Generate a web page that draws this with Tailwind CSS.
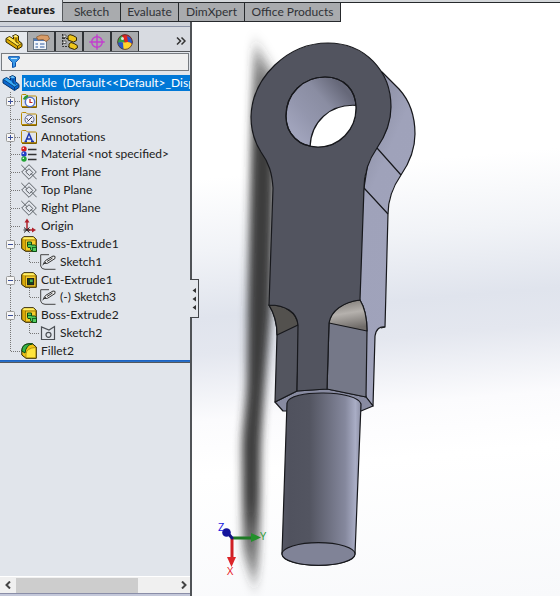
<!DOCTYPE html>
<html lang="en">
  <head>
    <meta charset="UTF-8" />
    <meta name="viewport" content="width=device-width, initial-scale=1.0" />
    <script src="https://cdn.jsdelivr.net/npm/@tailwindcss/browser@4"></script>
    <title>kuckle</title>
  </head>
  <body class="font-['Lato','Open_Sans',sans-serif] text-xs text-[#202020]">
    <!-- icon sprites -->
    <svg class="hidden">
      <defs>
        <linearGradient id="gold" x1="0" y1="0" x2="1" y2="1">
          <stop offset="0" stop-color="#fff27a" />
          <stop offset="1" stop-color="#f0bd0a" />
        </linearGradient>
      </defs>
      <symbol id="line" viewBox="0 0 20 18"><path d="M10.5 0V18M11 9.5H20" fill="none" stroke="#777" stroke-dasharray="1 1" /></symbol>
      <symbol id="pass" viewBox="0 0 20 18"><path d="M10.5 0V18" fill="none" stroke="#777" stroke-dasharray="1 1" /></symbol>
      <symbol id="end" viewBox="0 0 20 18"><path d="M10.5 0V10M11 9.5H20" fill="none" stroke="#777" stroke-dasharray="1 1" /></symbol>
      <symbol id="child" viewBox="0 0 20 18"><path d="M9.5 0V10M10 9.5H20" fill="none" stroke="#777" stroke-dasharray="1 1" /></symbol>
      <symbol id="minus" viewBox="0 0 20 18">
        <path d="M10.5 0V18M11 9.5H20" fill="none" stroke="#777" stroke-dasharray="1 1" />
        <rect x="6.5" y="5.5" width="8" height="8" rx="1" fill="#f6f6f6" stroke="#999" />
        <path d="M8 9.5H13" stroke="#3a4f9a" />
      </symbol>
      <symbol id="plus" viewBox="0 0 20 18">
        <use href="#minus" width="20" height="18" />
        <path d="M10.5 7V12" stroke="#3a4f9a" />
      </symbol>
      <symbol id="part" viewBox="0 0 18 16">
        <path d="M1 4.500L4.500 2.500 8.500 5V2.500L7.500 2 10.500.500 13.500 2V6.500L17 9.500V12.500L12.500 15.500 1 8Z" fill="#dca900" stroke="#332800" stroke-linejoin="round" />
        <path d="M1.500 4.500L4.500 3 9 6 11 8 16.500 9.800 12.500 12Z" fill="#ffe34d" />
        <path d="M8 2.300L10.500 1 13 2.300 11 3.500Z" fill="#fff08a" />
        <path d="M1.500 4.500L12.500 12V15M12.500 12L16.500 9.500M11 3.500V8L14 9.500" fill="none" stroke="#332800" stroke-width=".8" />
      </symbol>
      <symbol id="partblue" viewBox="0 0 18 16">
        <path d="M1 4.500L4.500 2.500 8.500 5V2.500L7.500 2 10.500.500 13.500 2V6.500L17 9.500V12.500L12.500 15.500 1 8Z" fill="#0866cf" stroke="#07366d" stroke-linejoin="round" />
        <path d="M1.500 4.500L4.500 3 9 6 11 8 16.500 9.800 12.500 12Z" fill="#36a9f5" />
        <path d="M8 2.300L10.500 1 13 2.300 11 3.500Z" fill="#6cc6ff" />
        <path d="M1.500 4.500L12.500 12V15M12.500 12L16.500 9.500M11 3.500V8L14 9.500" fill="none" stroke="#07366d" stroke-width=".8" />
      </symbol>
      <symbol id="folder" viewBox="0 0 16 16">
        <path d="M.5 2.500Q.5 1.500 1.500 1.500H5L6.500 3H14.500Q15.500 3 15.500 4V13.500H.5Z" fill="url(#gold)" stroke="#b88a08" />
        <path d="M1 14.500H15.500V4" fill="none" stroke="#7d6000" />
      </symbol>
      <symbol id="history" viewBox="0 0 16 16">
        <use href="#folder" width="16" height="16" />
        <circle cx="9" cy="9" r="4.700" fill="#fff" stroke="#5272cc" stroke-width="1.500" />
        <path d="M3 6.500A6 6 0 0 1 7 3" fill="none" stroke="#2b9a35" stroke-width="2.500" />
        <path d="M9 6V9.500H11.500" fill="none" stroke="#b22" stroke-width="1.200" />
      </symbol>
      <symbol id="sensors" viewBox="0 0 16 16">
        <use href="#folder" width="16" height="16" />
        <circle cx="8.500" cy="8.500" r="4.500" fill="#eef" stroke="#5b6690" />
        <path d="M6.500 10.500L11 6M5.500 7.500L7 8.500M10 10.500H11.500" stroke="#333" fill="none" />
      </symbol>
      <symbol id="note" viewBox="0 0 16 16">
        <use href="#folder" width="16" height="16" />
        <path d="M4.500 12.500L8 4.500 11.500 12.500M6 10H10.500M3.500 12.500H6M10 12.500H13" fill="none" stroke="#1c36b0" stroke-width="1.400" />
      </symbol>
      <symbol id="material" viewBox="0 0 16 16">
        <circle cx="3" cy="3" r="2.700" fill="#d81e1e" /><circle cx="3" cy="8" r="2.700" fill="#2340c8" /><circle cx="3" cy="13" r="2.700" fill="#22a535" />
        <circle cx="2.300" cy="2.200" r=".8" fill="#fff" /><circle cx="2.300" cy="7.200" r=".8" fill="#fff" /><circle cx="2.300" cy="12.200" r=".8" fill="#fff" />
        <path d="M7 3.500H15.500M7 8.500H15.500M7 13.500H15.500" stroke="#333" stroke-width="1.500" />
      </symbol>
      <symbol id="plane" viewBox="0 0 16 16">
        <path d="M8 .7L15.300 8 8 15.300.7 8ZM.3 1L6 6.700M10 9.500L15.700 15.300M8 4.700L11.800 8.500 8.500 11.500 4.700 8Z" fill="none" stroke="#5c6167" />
      </symbol>
      <symbol id="origin" viewBox="0 0 16 16">
        <path d="M6 12V3" stroke="#b0202a" stroke-width="1.500" /><path d="M3.500 4.500L6 .5 8.500 4.500Z" fill="#b0202a" />
        <path d="M6 12H12" stroke="#b0202a" stroke-width="1.500" /><path d="M11 9.500L15 12 11 14.500Z" fill="#b0202a" />
        <path d="M3 9.500L8.500 14.500M8.500 9.500L3 14.500M2.500 12H9" stroke="#222" />
      </symbol>
      <symbol id="box" viewBox="0 0 16 16">
        <path d="M.7 2.500L3 .7H12.500L15.300 3.500V15.300H4.500L.7 12.500Z" fill="#d9a908" stroke="#2d2400" />
        <path d="M1.500 2.500L3 1.200H12.300L14.500 3.500H4.500Z" fill="#fff06a" />
        <rect x="4.500" y="4" width="10.300" height="10.800" fill="#f5cd2a" stroke="#8a6900" stroke-width=".7" />
      </symbol>
      <symbol id="boss" viewBox="0 0 16 16">
        <use href="#box" width="16" height="16" />
        <path d="M6.500 6H10.500V9H13.500L15.500 10.500V15.500H11.500L9.500 13.500V11.500H7L6.500 10.500Z" fill="#52cc5c" stroke="#0c4a15" />
        <path d="M11 11.500H15.500M11.500 11.500V15.500M7 8.500H10.500" stroke="#0c4a15" stroke-width=".8" />
      </symbol>
      <symbol id="cut" viewBox="0 0 16 16">
        <use href="#box" width="16" height="16" />
        <rect x="6.700" y="6.700" width="5.800" height="5.800" fill="#49b956" stroke="#222" stroke-width="1.400" />
        <path d="M7 7H9V10H12V12H7Z" fill="#14451a" />
      </symbol>
      <symbol id="sketch" viewBox="0 0 16 16">
        <path d="M9 .7H.7V12Q1.500 15.300 5 15.300H15.500" fill="none" stroke="#444" />
        <path d="M3.500 9.500L5.500 6.500 13 2Q16 1.500 15 4.500L7.500 9.300Z" fill="#f2f2f2" stroke="#333" />
        <path d="M2.500 11L6 8M7 7.500L12.500 4" stroke="#333" />
      </symbol>
      <symbol id="sketch2" viewBox="0 0 16 16">
        <path d="M1.500 2V14.500H14.500V1.500L9 5Z" fill="none" stroke="#4b4f54" stroke-width="1.200" />
        <circle cx="8.500" cy="9.800" r="2.500" fill="none" stroke="#4b4f54" stroke-width="1.200" />
      </symbol>
      <symbol id="fillet" viewBox="0 0 16 16">
        <path d="M.8 8Q1 1 8 .8H11.500L15.300 4V15.300H5L.8 12Z" fill="#f0c414" stroke="#2d2400" />
        <path d="M.8 8Q1 1 8 .8H11.500Q5 2 4 10Z" fill="#36b548" stroke="#0c4a15" />
        <path d="M5 14.800V11Q5.500 5 14.800 4.500V14.800Z" fill="#ffe43c" stroke="#8a6d00" stroke-width=".6" />
      </symbol>
      <symbol id="props" viewBox="0 0 18 16">
        <rect x="1.500" y="4.500" width="13" height="11" fill="#f3f6fb" stroke="#678" />
        <rect x="2" y="5" width="12" height="2" fill="#4f79b8" />
        <path d="M3.500 10H6M8 10H12.500M3.500 13H6M8 13H12.500" stroke="#6f8fc0" stroke-width="1.500" />
        <path d="M4.500 3L9 1 16 1.500 17.500 5 14 7.500 11 5.500 6 6Z" fill="#d99c68" stroke="#8a5c34" stroke-width=".8" />
      </symbol>
      <symbol id="config" viewBox="0 0 18 16">
        <path d="M2.500 0V12.500H9M3 4.500H9" fill="none" stroke="#333" stroke-dasharray="2 1" />
        <path d="M3 1H6V3.500H3ZM3 7H6V9.500H3Z" fill="#eee" stroke="#444" stroke-width=".8" />
        <path d="M8 2L10 .7 13 1.500 16.500 3.500V6.500L13.500 8 8 6ZM9 10L11 8.500 14 9.500 17.300 11.500V14L14.500 15.500 9 13.500Z" fill="#edc51c" stroke="#332800" />
      </symbol>
      <symbol id="target" viewBox="0 0 16 16">
        <path d="M8 .3V15.700M.3 8H15.700" stroke="#c23fce" stroke-width="1.400" />
        <circle cx="8" cy="8" r="5.300" fill="none" stroke="#c23fce" stroke-width="1.400" />
      </symbol>
      <symbol id="ball" viewBox="0 0 16 16">
        <circle cx="8" cy="8" r="7.500" fill="#d81d1d" />
        <path d="M.7 9Q1 3 5 1.500L8 8.500Z" fill="#35a247" />
        <path d="M8 8.500L6.500.6A7.500 7.500 0 0 1 15 10Q12 7 8 8.500Z" fill="#e0251f" />
        <path d="M10 2A7.500 7.500 0 0 1 15.300 9.500Q13 8 11 8Z" fill="#2957c8" />
        <path d="M.8 9.500Q4 7.500 8 8.500 12 7 15 10A7.500 7.500 0 0 1 8 15.500 7.500 7.500 0 0 1 .8 9.500Z" fill="#ffd52b" />
        <path d="M.8 9Q3 7.500 6 8.500L6.500 15.300A7.500 7.500 0 0 1 .8 9Z" fill="#2957c8" />
        <circle cx="8" cy="8" r="7.400" fill="none" stroke="#333" stroke-width=".7" />
        <circle cx="5.500" cy="4.500" r="1.500" fill="#fff" fill-opacity=".8" />
      </symbol>
    </svg>

    <div class="flex h-screen flex-col overflow-hidden bg-white">
      <!-- command tabs -->
      <nav class="flex h-[22px] shrink-0 items-start bg-[linear-gradient(#d4d7da_0_2px,#26292c_2px_3px,#fff_3px)]">
        <button class="h-[22px] w-[63px] border-r border-b border-[#55585c] bg-[#dee1e6] font-['Open_Sans',sans-serif] text-[11px] font-bold">Features</button>
        <button class="mt-[2px] h-[20px] w-[58px] border border-l-0 border-[#26292c] bg-[#a9abae] text-[#303236]">Sketch</button>
        <button class="mt-[2px] h-[20px] w-[58px] border border-l-0 border-[#26292c] bg-[#a9abae] text-[#303236]">Evaluate</button>
        <button class="mt-[2px] h-[20px] w-[66px] border border-l-0 border-[#26292c] bg-[#a9abae] text-[#303236]">DimXpert</button>
        <button class="mt-[2px] h-[20px] w-[96px] border border-l-0 border-[#26292c] bg-[#a9abae] whitespace-nowrap text-[#303236]">Office Products</button>
      </nav>

      <div class="flex min-h-0 flex-1">
        <aside class="relative flex w-[192px] shrink-0 flex-col border-r-2 border-[#505357] bg-[#e1e5eb]">
          <div class="h-[9px] bg-[linear-gradient(#cfd3da_0_4px,#8991a5_4px_5px,#d8dbe1_5px)]"></div>
          <div class="flex h-[21px] items-stretch border-b border-[#55585c] bg-[#d8dbe1]">
            <button aria-label="Feature tree" class="-mb-px flex w-[28px] items-center justify-center border-t border-r border-[#55585c] bg-[#e6e9ee]"><svg class="h-4 w-[18px]"><use href="#part" /></svg></button>
            <button aria-label="Properties" class="flex w-[28px] items-center justify-center border-t border-r-2 border-[#303337] bg-[#a9abae]"><svg class="h-4 w-[18px]"><use href="#props" /></svg></button>
            <button aria-label="Configurations" class="flex w-[28px] items-center justify-center border-t border-r-2 border-[#303337] bg-[#a9abae]"><svg class="h-4 w-[18px]"><use href="#config" /></svg></button>
            <button aria-label="DimXpert manager" class="flex w-[28px] items-center justify-center border-t border-r-2 border-[#303337] bg-[#a9abae]"><svg class="size-4"><use href="#target" /></svg></button>
            <button aria-label="Display manager" class="flex w-[27px] items-center justify-center border-t border-r border-[#303337] bg-[#a9abae]"><svg class="size-4"><use href="#ball" /></svg></button>
            <button aria-label="More" class="mr-1 ml-auto flex items-center"><svg class="h-2 w-[10px]" viewBox="0 0 10 8" fill="none" stroke="#333" stroke-width="1.500"><path d="M1 .5L4.500 4 1 7.500M5.500 .5L9 4 5.500 7.500" /></svg></button>
          </div>
          <label class="mx-px mt-px flex h-[18px] items-center border border-[#777b80] bg-[#efefef] pl-[6px]">
            <svg class="h-3 w-3" viewBox="0 0 12 12"><path d="M.7.700H11.300V2.500L7.500 6.500V10.500L4.500 11.500V6.500L.7 2.500Z" fill="#3b9ae8" stroke="#0b4fa8" /><path d="M3 2.500H9" stroke="#c8e8ff" /></svg>
            <input aria-label="Filter" class="min-w-0 flex-1 bg-transparent outline-none" />
          </label>

          <!-- feature tree -->
          <ul class="mt-[3px] grid h-[286px] shrink-0 auto-rows-fr overflow-hidden whitespace-nowrap">
            <li class="flex items-center gap-[2px] pl-[2px]"><svg class="h-4 w-[18px] shrink-0"><use href="#partblue" /></svg><span class="flex-1 overflow-hidden bg-[#0078d7] pl-px leading-4 whitespace-pre text-white">kuckle  (Default&lt;&lt;Default&gt;_Disp</span></li>
            <li class="flex items-center"><button aria-label="Expand History"><svg class="block h-[18px] w-5"><use href="#plus" /></svg></button><svg class="mr-1 ml-px size-4"><use href="#history" /></svg>History</li>
            <li class="flex items-center"><svg class="h-[18px] w-5"><use href="#line" /></svg><svg class="mr-1 ml-px size-4"><use href="#sensors" /></svg>Sensors</li>
            <li class="flex items-center"><button aria-label="Expand Annotations"><svg class="block h-[18px] w-5"><use href="#plus" /></svg></button><svg class="mr-1 ml-px size-4"><use href="#note" /></svg>Annotations</li>
            <li class="flex items-center"><svg class="h-[18px] w-5"><use href="#line" /></svg><svg class="mr-1 ml-px size-4"><use href="#material" /></svg>Material &lt;not specified&gt;</li>
            <li class="flex items-center"><svg class="h-[18px] w-5"><use href="#line" /></svg><svg class="mr-1 ml-px size-4"><use href="#plane" /></svg>Front Plane</li>
            <li class="flex items-center"><svg class="h-[18px] w-5"><use href="#line" /></svg><svg class="mr-1 ml-px size-4"><use href="#plane" /></svg>Top Plane</li>
            <li class="flex items-center"><svg class="h-[18px] w-5"><use href="#line" /></svg><svg class="mr-1 ml-px size-4"><use href="#plane" /></svg>Right Plane</li>
            <li class="flex items-center"><svg class="h-[18px] w-5"><use href="#line" /></svg><svg class="mr-1 ml-px size-4"><use href="#origin" /></svg>Origin</li>
            <li class="flex items-center"><button aria-label="Collapse Boss-Extrude1"><svg class="block h-[18px] w-5"><use href="#minus" /></svg></button><svg class="mr-1 ml-px size-4"><use href="#boss" /></svg>Boss-Extrude1</li>
            <li class="flex items-center"><svg class="h-[18px] w-5"><use href="#pass" /></svg><svg class="h-[18px] w-5"><use href="#child" /></svg><svg class="mr-1 size-4"><use href="#sketch" /></svg>Sketch1</li>
            <li class="flex items-center"><button aria-label="Collapse Cut-Extrude1"><svg class="block h-[18px] w-5"><use href="#minus" /></svg></button><svg class="mr-1 ml-px size-4"><use href="#cut" /></svg>Cut-Extrude1</li>
            <li class="flex items-center"><svg class="h-[18px] w-5"><use href="#pass" /></svg><svg class="h-[18px] w-5"><use href="#child" /></svg><svg class="mr-1 size-4"><use href="#sketch" /></svg>(-) Sketch3</li>
            <li class="flex items-center"><button aria-label="Collapse Boss-Extrude2"><svg class="block h-[18px] w-5"><use href="#minus" /></svg></button><svg class="mr-1 ml-px size-4"><use href="#boss" /></svg>Boss-Extrude2</li>
            <li class="flex items-center"><svg class="h-[18px] w-5"><use href="#pass" /></svg><svg class="h-[18px] w-5"><use href="#child" /></svg><svg class="mr-1 size-4"><use href="#sketch2" /></svg>Sketch2</li>
            <li class="flex items-center"><svg class="h-[18px] w-5"><use href="#end" /></svg><svg class="mr-1 ml-px size-4"><use href="#fillet" /></svg>Fillet2</li>
          </ul>
          <div class="h-[3px] shrink-0 border-t border-b border-t-[#1c64c4] border-b-[#55585c] bg-[#2a6fc4]"></div>

          <div class="mt-auto flex h-[17px] shrink-0 items-center border-t border-white bg-[#f0f0f0]">
            <button aria-label="Scroll left" class="flex h-4 w-4 items-center justify-center"><svg class="h-2 w-[6px]" viewBox="0 0 6 8" fill="none" stroke="#444" stroke-width="2"><path d="M5 .5L1.500 4 5 7.500" /></svg></button>
            <div class="h-[15px] flex-1"><div class="h-full w-3/4 bg-[#cdcdcd]"></div></div>
            <button aria-label="Scroll right" class="flex h-4 w-3 items-center justify-center"><svg class="h-2 w-[6px]" viewBox="0 0 6 8" fill="none" stroke="#444" stroke-width="2"><path d="M1 .5L4.500 4 1 7.500" /></svg></button>
          </div>
          <div class="h-[3px] shrink-0 border-t border-[#8a8ea8] bg-[#c4c8da]"></div>

          <!-- splitter handle -->
          <button aria-label="Collapse panel" class="absolute top-[257px] left-[190px] z-10 flex h-[39px] w-[9px] items-center justify-center border border-l-0 border-[#44474b] bg-[#e4e7ec]">
            <svg class="h-[26px] w-[6px]" viewBox="0 0 6 26" fill="#333"><path d="M5 2V7L1.500 4.500ZM5 10.500V15.500L1.500 13ZM5 19V24L1.500 21.500Z" /></svg>
          </button>
        </aside>

        <!-- model view -->
        <main class="min-w-0 flex-1 bg-[linear-gradient(175deg,#fff_0%,#fff_26%,#f1f3f7_38%,#e0e4ed_49%,#e4e7ef_55%,#fbfbfd_66%,#fff_75%,#f8f9fb_100%)]">
          <svg class="h-full w-full" viewBox="192 22 368 574" preserveAspectRatio="xMinYMin meet" role="img" aria-label="Kuckle model">
            <defs>
              <filter id="soft" x="-100%" y="-10%" width="300%" height="120%"><feGaussianBlur stdDeviation="4 9" /></filter>
              <linearGradient id="shade" x1="0" y1="0" x2="0" y2="1"><stop offset="0" stop-color="#333" stop-opacity=".4" /><stop offset=".15" stop-color="#333" stop-opacity=".95" /><stop offset=".85" stop-color="#333" stop-opacity=".95" /><stop offset="1" stop-color="#333" stop-opacity=".4" /></linearGradient>
              <linearGradient id="shaft"><stop offset="0" stop-color="#565865" /><stop offset=".1" stop-color="#50525e" /><stop offset=".35" stop-color="#535561" /><stop offset=".8" stop-color="#85889d" /><stop offset=".93" stop-color="#a9adc5" /><stop offset="1" stop-color="#8d90a6" /></linearGradient>
              <linearGradient id="bore" x1=".15" y1=".8" x2=".85" y2=".2"><stop offset="0" stop-color="#a0a3bb" /><stop offset=".3" stop-color="#9396ad" /><stop offset=".65" stop-color="#8a8da2" /><stop offset="1" stop-color="#666879" /></linearGradient>
              <linearGradient id="side" x1="0" y1="0" x2=".5" y2="1"><stop offset="0" stop-color="#8f92a8" /><stop offset=".16" stop-color="#9b9eb5" /><stop offset=".3" stop-color="#9194aa" /><stop offset=".45" stop-color="#9fa2ba" /><stop offset="1" stop-color="#a0a3bb" /></linearGradient>
              <linearGradient id="scoop" x1="0" y1="0" x2=".2" y2="1"><stop offset="0" stop-color="#77736f" /><stop offset=".5" stop-color="#b5b1ad" /><stop offset="1" stop-color="#706c69" /></linearGradient>
              <clipPath id="hole"><path id="holepath" d="M286 116C286 94 303 77 325 77C344 77 356 90 356 108C356 130 339 147 318 147C299 147 286 134 286 116Z" /></clipPath>
            </defs>
            <path d="M253 45L262 55 276 80 274 190 271 310 264 395 261 440 259 560 256 586 250 575 243 550 242 440 247 390 248 300 252 120Z" fill="url(#shade)" filter="url(#soft)" />
            <g stroke="#17181c" stroke-width="1.200" stroke-linejoin="round">
              <path d="M382 72L399 89C410 101 415 116 415 134C415 149 410 162 401 175C392 188 388 199 388 214L385 327C380 326 376 329 375 336L373 406 366 397 340 300 364 188Z" fill="url(#side)" />
              <path d="M381 328L385 327" />
              <path d="M377 148L401 175M364 188L388 214" fill="none" />
              <path d="M275 402L297 391 327 389 366 397 373 406 361 411H283Z" fill="#888ba1" />
              <path d="M269 305C274 313 277 324 277 335L275 402 297 391 299 325 290 306Z" fill="#53555f" />
              <path d="M360 300C365 308 367 319 367 331L366 397 327 389 329 323Z" fill="#757888" />
              <path d="M269 305C274 313 277 324 277 335L298 325C297 312 285 305 269 305Z" fill="#53514e" />
              <path d="M360 300C365 308 367 319 367 331L329 323C331 310 343 302 360 300Z" fill="url(#scoop)" />
              <path d="M328 43C364 43 391 70 391 107C391 123 386 135 377 148C368 161 364 173 364 188L360 300C343 302 331 311 329 323L327 389 297 391 298 325C297 312 285 305 269 305L273 188C272 173 269 163 261 152C254 141 251 130 251 117C252 77 288 43 328 43Z" fill="#52545f" />
              <use href="#holepath" fill="url(#bore)" />
              <path clip-path="url(#hole)" d="M358 105.500C330 103 310 122 310 149H360Z" fill="#fff" />
              <use href="#holepath" fill="none" />
              <path d="M287 403C289 389 358 390 361 404L355 554C354 569 283 569 282 554Z" fill="url(#shaft)" />
              <ellipse cx="318.500" cy="554" rx="36.500" ry="11.300" fill="#808397" />
            </g>
            <!-- axis triad -->
            <g stroke-linecap="round">
              <path d="M233 538H252" stroke="#1d7a24" stroke-width="3" />
              <path d="M251 533L261 537.500 251 542Z" fill="#23902b" />
              <path d="M232 539V559" stroke="#cf1f24" stroke-width="3" />
              <path d="M227 557H236L231.500 567Z" fill="#dc2428" />
              <path d="M227 532L232 538" stroke="#141480" stroke-width="3" />
              <circle cx="226.500" cy="532.500" r="4.300" fill="#14149c" />
            </g>
            <g class="font-['Open_Sans',sans-serif] text-[11px]">
              <text x="218" y="531" fill="#2020e0">Z</text>
              <text x="260" y="540" fill="#2a9a33">Y</text>
              <text x="227" y="575" fill="#e8181c">X</text>
            </g>
          </svg>
        </main>
      </div>
    </div>
  </body>
</html>
